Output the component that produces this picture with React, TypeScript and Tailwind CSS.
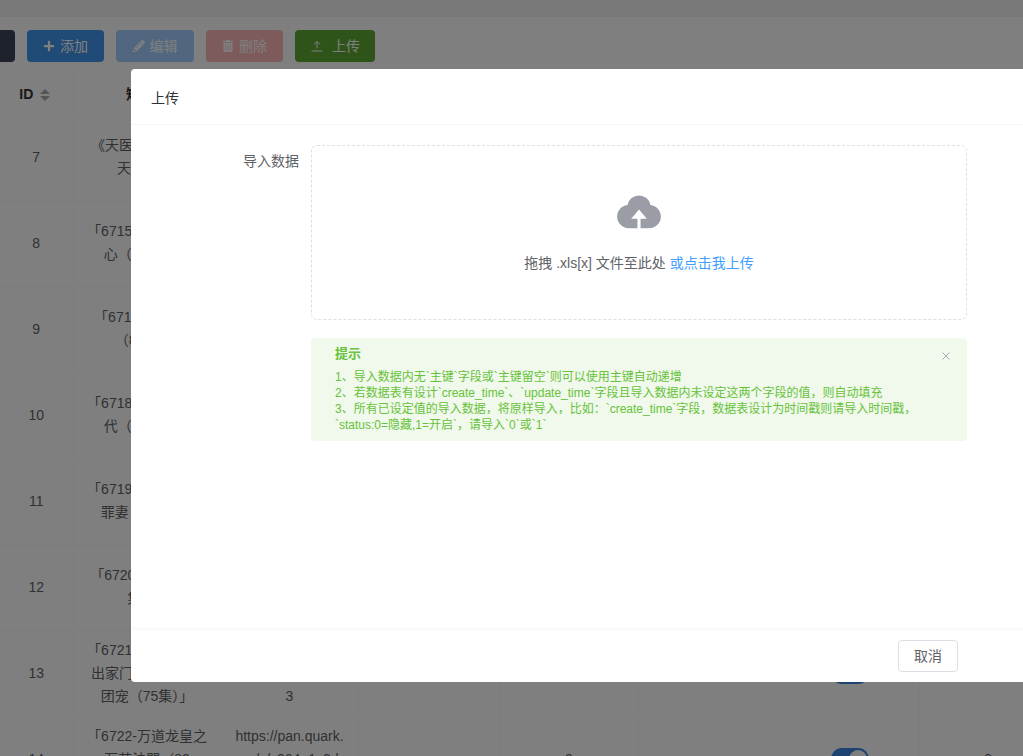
import { FaPlus, FaPencilAlt, FaTrashAlt } from "react-icons/fa";

const rows = [
  { id: 7, name: ["《天医下山之医神", "天医归来!"], url: [], num: "" },
  { id: 8, name: ["「6715-重生之我的", "心（100集）」"], url: [], num: "" },
  { id: 9, name: ["「6716-重生之我", "（80集）」"], url: [], num: "" },
  { id: 10, name: ["「6718-穿越时空的", "代（100集）」"], url: [], num: "" },
  { id: 11, name: ["「6719-替嫁之王爷", "罪妻（80集）」"], url: [], num: "" },
  { id: 12, name: ["「6720-重生归来2", "集）」."], url: [], num: "" },
  { id: 13, name: ["「6721-被赶出的千", "出家门后我被全家", "团宠（75集）」"], url: ["", "", "3"], num: "" },
  { id: 14, name: ["「6722-万道龙皇之", "万苦法門（80", "集）」"], url: ["https://pan.quark.", "cn/s/c364e1c3d", ""], num: "0" },
];

function Sort() {
  return (
    <span className="inline-flex flex-col gap-[2px] ml-[7px] mr-[3px] align-middle">
      <span className="w-0 h-0 border-x-[5px] border-x-transparent border-b-[5px] border-b-[#a8abb2]" />
      <span className="w-0 h-0 border-x-[5px] border-x-transparent border-t-[5px] border-t-[#a8abb2]" />
    </span>
  );
}

function Switch() {
  return (
    <span className="inline-flex items-center justify-end w-[38px] h-[22px] rounded-full bg-[#3f87e0] px-[2px] align-middle">
      <span className="w-[18px] h-[18px] rounded-full bg-white" />
    </span>
  );
}

function Footer() {
  return (
    <div className="h-[52px] flex items-center pl-[767px] shadow-[0_-2px_4px_rgba(0,0,0,0.03)]">
      <button className="w-[60px] h-8 rounded border border-[#dcdfe6] bg-white text-sm text-[#606266]">取消</button>
    </div>
  );
}

export default function App() {
  return (
    <div className="relative h-[756px] w-[1023px] overflow-hidden bg-white text-sm text-[#606266] font-['Liberation_Sans','Noto_Sans_CJK_SC',sans-serif]">
      <div className="h-[17px] bg-[#f0f0f0]" />

      <div className="flex gap-3 mt-[13px] -ml-[24px]">
        <button className="w-[39px] h-8 rounded bg-[#3a4558]" />
        <button className="w-[77px] h-8 rounded bg-[#3e96ec] text-white flex items-center justify-center gap-[5px]">
          <FaPlus className="w-3 h-3" />添加
        </button>
        <button className="w-[78px] h-8 rounded bg-[#a0cfff] text-white flex items-center justify-center gap-[5px]">
          <FaPencilAlt className="w-3 h-3" />编辑
        </button>
        <button className="w-[77px] h-8 rounded bg-[#fab6b6] text-white flex items-center justify-center gap-[5px]">
          <FaTrashAlt className="w-3 h-3" />删除
        </button>
        <button className="w-[80px] h-8 rounded bg-[#5fa832] text-white flex items-center justify-center gap-[8px]">
          <svg className="w-[14px] h-[14px]" viewBox="0 0 14 14" fill="none" stroke="currentColor" strokeWidth="1">
            <path d="M7 9.5V2.5M4 5.5l3-3 3 3M1.5 12h11" />
          </svg>
          上传
        </button>
      </div>

      <table className="table-fixed w-[1057px] mt-[10px] border-collapse text-center">
        <colgroup>
          <col className="w-[73px]" />
          <col className="w-[148px]" />
          <col className="w-[137px]" />
          <col className="w-[142px]" />
          <col className="w-[138px]" />
          <col className="w-[143px]" />
          <col className="w-[138px]" />
          <col className="w-[138px]" />
        </colgroup>
        <thead>
          <tr className="h-[42px] border-b border-[#f7f8f9]">
            <th className="pt-[2px] font-bold text-[#303133] border-r border-[#f7f8f9]">ID<Sort /></th>
            <th className="pt-[2px] font-bold text-[#303133] border-r border-[#f7f8f9]">短剧名</th>
            <th className="border-r border-[#f7f8f9]" />
            <th className="border-r border-[#f7f8f9]" />
            <th className="border-r border-[#f7f8f9]" />
            <th className="border-r border-[#f7f8f9]" />
            <th className="border-r border-[#f7f8f9]" />
            <th />
          </tr>
        </thead>
        <tbody>
          {rows.map((r) => (
            <tr key={r.id} className="h-[86px] border-b border-[#f7f8f9]">
              <td className="border-r border-[#f7f8f9]">{r.id}</td>
              <td className="border-r border-[#f7f8f9] leading-[23px] whitespace-nowrap">
                {r.name.map((l) => <div key={l}>{l}</div>)}
              </td>
              <td className="border-r border-[#f7f8f9] leading-[23px] whitespace-nowrap">
                {r.url.map((l, i) => <div key={i} className="h-[23px]">{l}</div>)}
              </td>
              <td className="border-r border-[#f7f8f9]" />
              <td className="border-r border-[#f7f8f9]">{r.num}</td>
              <td className="border-r border-[#f7f8f9]" />
              <td className="border-r border-[#f7f8f9]"><Switch /></td>
              <td>{r.num}</td>
            </tr>
          ))}
        </tbody>
      </table>

      <div className="absolute inset-0 bg-black/50" />

      <div className="absolute left-[131px] top-[69px] w-[1000px] h-[613px] rounded bg-white flex flex-col">
        <div className="h-[56px] flex items-center pl-5 pt-[2px] border-b border-[#f5f5f5] text-[#303133]">上传</div>

        <div className="flex-1 flex pt-5">
          <div className="w-[168px] text-right pt-[7px] leading-[18px]">导入数据</div>
          <div className="w-[656px] ml-3">
            <div className="h-[175px] rounded-md border border-dashed border-[#dcdfe6] flex flex-col items-center">
              <svg className="w-[50px] h-[50px] mt-[40px] fill-[#9a9da6]" viewBox="0 0 1024 1024">
                <path d="M544 864V672h128L512 480 352 672h128v192H320v-1.6c-5.376.32-10.496 1.6-16 1.6A240 240 0 0 1 64 624c0-123.136 93.12-223.488 212.608-237.248A239.808 239.808 0 0 1 512 192a239.872 239.872 0 0 1 235.456 194.752c119.488 13.76 212.48 114.112 212.48 237.248a240 240 0 0 1-240 240c-5.376 0-10.56-1.28-16-1.6v1.6H544z" />
              </svg>
              <div className="mt-[17px] leading-[20px]">
                拖拽 .xls[x] 文件至此处 <span className="text-[#409eff]">或点击我上传</span>
              </div>
            </div>

            <div className="relative mt-[18px] h-[103px] rounded bg-[#f0f9eb] text-[#67c23a] pl-6 pt-[8px]">
              <div className="text-[13px] font-bold leading-[16px]">提示</div>
              <div className="mt-[7px] text-xs leading-[16px]">
                <p>1、导入数据内无`主键`字段或`主键留空`则可以使用主键自动递增</p>
                <p>2、若数据表有设计`create_time`、`update_time`字段且导入数据内未设定这两个字段的值，则自动填充</p>
                <p>3、所有已设定值的导入数据，将原样导入，比如：`create_time`字段，数据表设计为时间戳则请导入时间戳，</p>
                <p>`status:0=隐藏,1=开启`，请导入`0`或`1`</p>
              </div>
              <svg className="absolute right-[17px] top-[14px] w-2 h-2" viewBox="0 0 8 8" stroke="#a8abb2" strokeWidth="1">
                <path d="M0.5 0.5l7 7M7.5 0.5l-7 7" />
              </svg>
            </div>
          </div>
        </div>

        <Footer />
      </div>
    </div>
  );
}
